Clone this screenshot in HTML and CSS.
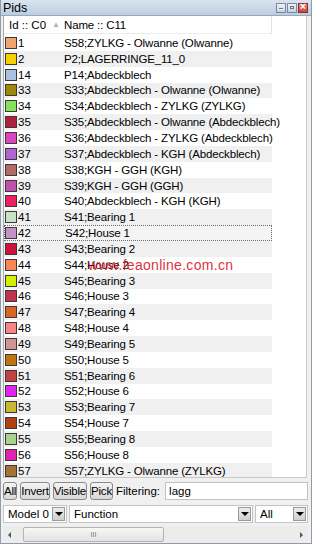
FILE: index.html
```html
<!DOCTYPE html>
<html lang="en">

<head>
    <meta charset="UTF-8" />
    <meta name="viewport" content="width=device-width, initial-scale=1.0" />
    <title>Pids</title>
    <link rel="stylesheet" href="styles.css">
</head>

<body>
    <div class="window">
        <div class="titlebar">
            <span class="title">Pids</span>
            <div class="win-btns">
                <span class="win-btn min"></span>
                <span class="win-btn max"></span>
                <span class="win-btn close"></span>
            </div>
        </div>

        <div class="list">
            <div class="list-head">
                <div class="col-id">Id :: C0 <span class="sort">&#9650;</span></div>
                <div class="col-name">Name :: C11</div>
            </div>
            <div class="rows" id="rows"></div>
            <span class="watermark">www.feaonline.com.cn</span>
        </div>

        <div class="toolbar">
            <button class="btn">All</button>
            <button class="btn">Invert</button>
            <button class="btn">Visible</button>
            <button class="btn">Pick</button>
            <span class="label">Filtering:</span>
            <input class="filter" type="text" value="lagg">
        </div>

        <div class="combos">
            <div class="combo model"><span>Model 0</span><i class="drop"></i></div>
            <div class="combo func"><span>Function</span><i class="drop"></i></div>
            <div class="combo kind"><span>All</span><i class="drop"></i></div>
        </div>

        <div class="hscroll">
            <span class="arr left"></span>
            <div class="track">
                <div class="thumb"><span class="grip">III</span></div>
            </div>
            <span class="arr right"></span>
        </div>
    </div>

    <script>
        const pids = [
            ["1", "S58;ZYLKG - Olwanne (Olwanne)", "#f2a46e"],
            ["2", "P2;LAGERRINGE_11_0", "#f7d000"],
            ["14", "P14;Abdeckblech", "#a9c1df"],
            ["33", "S33;Abdeckblech - Olwanne (Olwanne)", "#9c8a05"],
            ["34", "S34;Abdeckblech - ZYLKG (ZYLKG)", "#84e35a"],
            ["35", "S35;Abdeckblech - Olwanne (Abdeckblech)", "#b0203e"],
            ["36", "S36;Abdeckblech - ZYLKG (Abdeckblech)", "#e043c2"],
            ["37", "S37;Abdeckblech - KGH (Abdeckblech)", "#b363d2"],
            ["38", "S38;KGH - GGH (KGH)", "#b26a62"],
            ["39", "S39;KGH - GGH (GGH)", "#c34fb0"],
            ["40", "S40;Abdeckblech - KGH (KGH)", "#f01e62"],
            ["41", "S41;Bearing 1", "#c9e2c7"],
            ["42", "S42;House 1", "#c392c9"],
            ["43", "S43;Bearing 2", "#d0113b"],
            ["44", "S44;House 2", "#f98653"],
            ["45", "S45;Bearing 3", "#d3f000"],
            ["46", "S46;House 3", "#c13251"],
            ["47", "S47;Bearing 4", "#d96524"],
            ["48", "S48;House 4", "#f98385"],
            ["49", "S49;Bearing 5", "#d29393"],
            ["50", "S50;House 5", "#c27312"],
            ["51", "S51;Bearing 6", "#c24343"],
            ["52", "S52;House 6", "#e224f2"],
            ["53", "S53;Bearing 7", "#c9b932"],
            ["54", "S54;House 7", "#b2410f"],
            ["55", "S55;Bearing 8", "#a9d190"],
            ["56", "S56;House 8", "#e222b3"],
            ["57", "S57;ZYLKG - Olwanne (ZYLKG)", "#a37432"],
        ];

        const rows = document.getElementById("rows");

        pids.forEach(([id, name, color], i) => {
            const row = document.createElement("div");
            row.className = "row";
            if (i % 2 === 1) row.classList.add("odd");
            if (id === "42") row.classList.add("current");

            const cell = document.createElement("div");
            cell.className = "col-id";

            const swatch = document.createElement("span");
            swatch.className = "swatch";
            swatch.style.backgroundColor = color;
            cell.appendChild(swatch);
            cell.appendChild(document.createTextNode(id));

            const nameCell = document.createElement("div");
            nameCell.className = "col-name";
            nameCell.textContent = name;

            row.appendChild(cell);
            row.appendChild(nameCell);
            rows.appendChild(row);
        });
    </script>
</body>

</html>
```

FILE: styles.css
```css
* {
    margin: 0;
    padding: 0;
    box-sizing: border-box;
    font-family: "Liberation Sans", Arial, sans-serif;
}

body {
    width: 312px;
    height: 544px;
    overflow: hidden;
    background: #f0f0f0;
    font-size: 11px;
    color: #000;
}

.window {
    width: 312px;
    height: 544px;
    display: flex;
    flex-direction: column;
    border: 1px solid #8e9cad;
    border-top: none;
    background: #f0f0f0;
    overflow: hidden;
}

/* title bar */
.titlebar {
    height: 16px;
    flex-shrink: 0;
    display: flex;
    align-items: center;
    justify-content: space-between;
    padding: 0 3px 0 2px;
    background: linear-gradient(#d9e4f0, #bccde0);
    border-bottom: 1px solid #9aa9ba;
}

.title {
    font-size: 12.5px;
    line-height: 14px;
}

.win-btns {
    display: flex;
    gap: 1px;
}

.win-btn {
    width: 10px;
    height: 10px;
    border: 1px solid #7d8a99;
    background: linear-gradient(#eef2f7, #c6d1dd);
    position: relative;
}

.win-btn.min::after {
    content: "";
    position: absolute;
    left: 2px;
    right: 2px;
    bottom: 2px;
    height: 1px;
    background: #fff;
    border-top: 1px solid #6b7684;
}

.win-btn.max::after {
    content: "";
    position: absolute;
    left: 2px;
    right: 2px;
    top: 2px;
    bottom: 3px;
    border: 1px solid #6b7684;
}

.win-btn.close {
    border-color: #8c2c2c;
    background: linear-gradient(#e58e7f, #c5473a);
}

.win-btn.close::after {
    content: "\00d7";
    position: absolute;
    left: 0;
    right: 0;
    top: -3px;
    text-align: center;
    color: #fff;
    font-size: 10px;
    font-weight: bold;
}

/* pid list */
.list {
    position: relative;
    flex: 1;
    margin: 0 4px 0 2px;
    background: #fff;
    border-left: 1px solid #a9a9a9;
    border-right: 1px solid #c8c8c8;
    border-bottom: 1px solid #c8c8c8;
    overflow: hidden;
    font-size: 11.5px;
}

.list-head {
    height: 18px;
    display: flex;
    align-items: center;
    width: 268px;
    border-right: 1px solid #e4e4e4;
    border-bottom: 1px solid #ececec;
}

.list-head .col-id {
    padding-left: 5px;
    color: #000;
}

.sort {
    font-size: 8px;
    color: #b4b4b4;
    margin-left: 6px;
    vertical-align: 1px;
}

.col-id {
    width: 60px;
    flex-shrink: 0;
    display: flex;
    align-items: center;
}

.col-name {
    white-space: nowrap;
    letter-spacing: -0.15px;
}

.rows {
    padding-top: 1px;
}

.row {
    height: 15.85px;
    width: 268px;
    display: flex;
    align-items: center;
}

.row.odd {
    background: #f0f0f0;
}

.row.current {
    background: #f4f4f4;
    border: 1px dotted #6c6c6c;
}

.row .col-id {
    padding-left: 1px;
}

.row.current .col-id {
    padding-left: 0;
}

.swatch {
    width: 12px;
    height: 12px;
    border: 1px solid #3a3a3a;
    margin-right: 1px;
    flex-shrink: 0;
}

.watermark {
    position: absolute;
    left: 84px;
    top: 241px;
    color: #d8182b;
    font-size: 14px;
    letter-spacing: 0.3px;
    opacity: 0.9;
}

/* filter bar */
.toolbar {
    display: flex;
    align-items: center;
    gap: 3px;
    padding: 3px 3px 0 2px;
    height: 22px;
    flex-shrink: 0;
}

.btn {
    height: 18px;
    padding: 0;
    font-size: 11.5px;
    letter-spacing: -0.2px;
    background: linear-gradient(#f4f4f4, #d8d8d8);
    border: 1px solid #8a8a8a;
    border-radius: 3px;
    color: #000;
}

.label {
    font-size: 11.5px;
}

.filter {
    flex: 1;
    min-width: 0;
    height: 18px;
    margin-left: 2px;
    font-size: 11.5px;
    padding-left: 3px;
    border: 1px solid #c2c2c2;
    background: #fff;
    outline: none;
}

/* combo row */
.combos {
    display: flex;
    gap: 2px;
    padding: 5px 3px 0 2px;
    height: 24px;
    font-size: 11.5px;
    flex-shrink: 0;
}

.combo {
    height: 18px;
    display: flex;
    align-items: center;
    justify-content: space-between;
    background: #fff;
    border: 1px solid #c4c4c4;
    padding: 0 1px 0 4px;
}

.combo.model {
    width: 64px;
}

.combo.func {
    flex: 1;
}

.combo.kind {
    width: 53px;
}

.drop {
    width: 13px;
    height: 14px;
    background: linear-gradient(#ececec, #cfcfcf);
    border: 1px solid #9a9a9a;
    position: relative;
}

.drop::after {
    content: "";
    position: absolute;
    left: 2px;
    top: 4px;
    border-left: 4px solid transparent;
    border-right: 4px solid transparent;
    border-top: 4px solid #000;
}

/* horizontal scrollbar */
.hscroll {
    display: flex;
    align-items: center;
    height: 17px;
    flex-shrink: 0;
    margin: 2px 3px 0 2px;
    background: #ececec;
}

.arr {
    width: 14px;
    height: 15px;
    position: relative;
}

.arr::after {
    content: "";
    position: absolute;
    top: 5px;
    border-top: 3px solid transparent;
    border-bottom: 3px solid transparent;
}

.arr.left::after {
    left: 5px;
    border-right: 3px solid #555;
}

.arr.right::after {
    right: 5px;
    border-left: 3px solid #555;
}

.track {
    flex: 1;
    height: 15px;
    padding-left: 6px;
}

.thumb {
    width: 141px;
    height: 15px;
    border: 1px solid #b4b4b4;
    border-radius: 2px;
    background: linear-gradient(#f8f8f8, #e2e2e2);
    display: flex;
    align-items: center;
    justify-content: center;
}

.grip {
    font-size: 7px;
    color: #777;
}
```
